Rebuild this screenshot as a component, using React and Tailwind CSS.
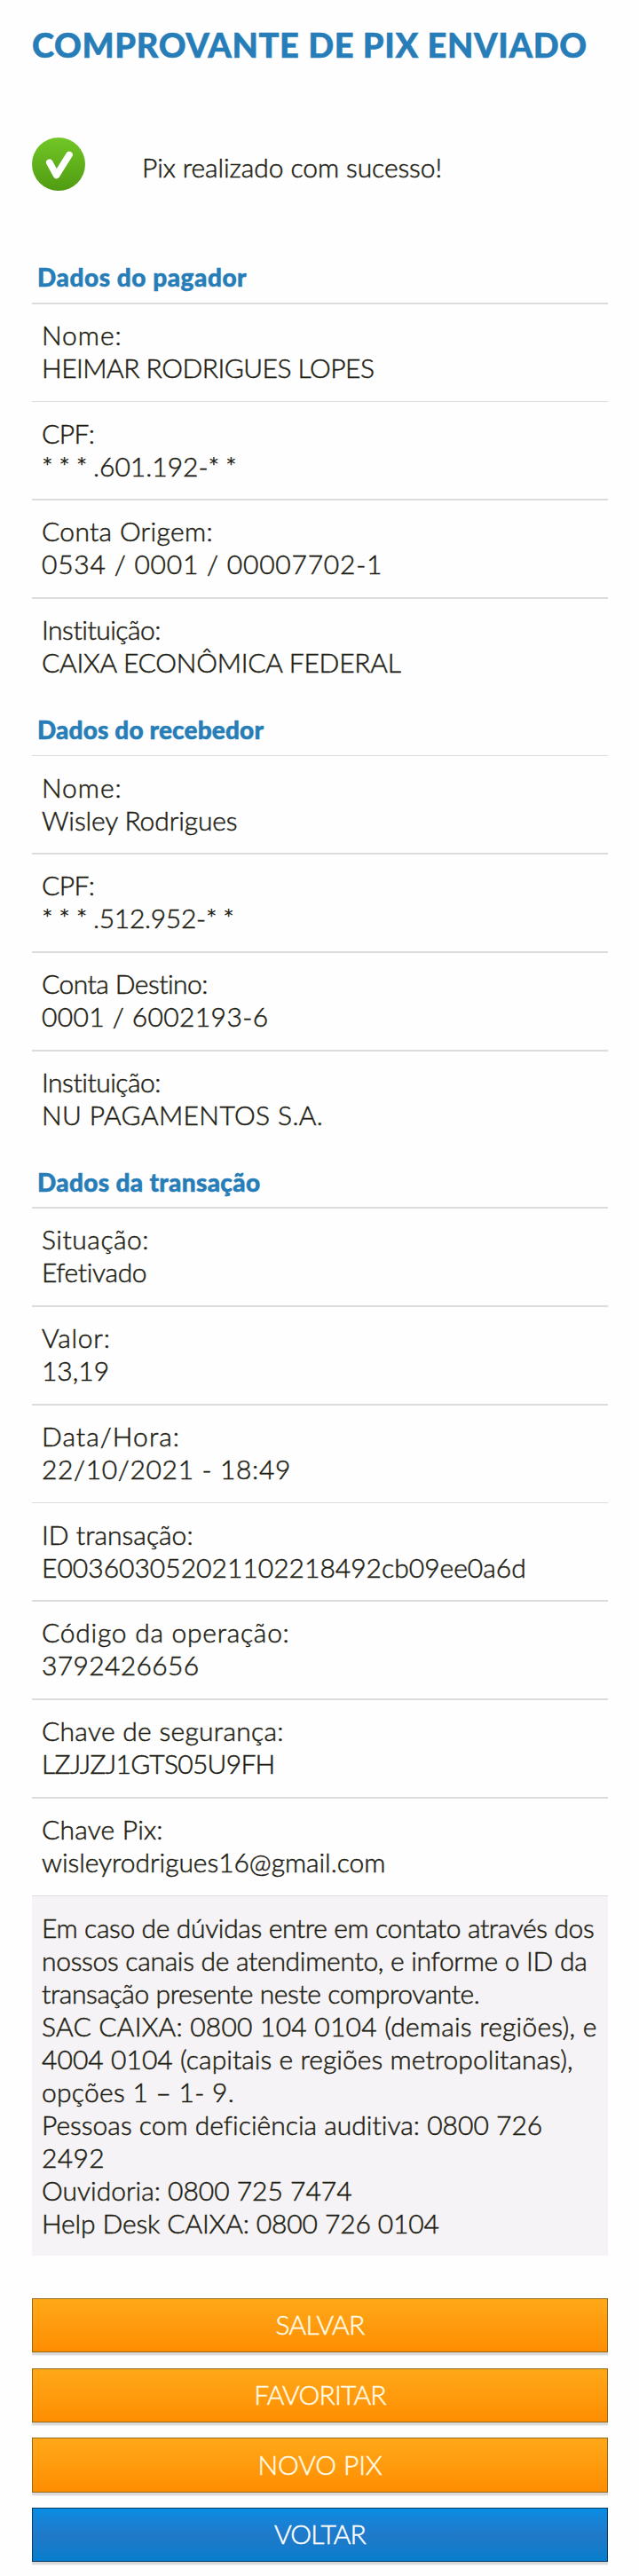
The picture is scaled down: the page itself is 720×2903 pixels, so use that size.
const THIN = "border-t pt-[17px]";
const THICK = "border-t-2 pt-4";

const payer = [
  { rule: THICK, h: "h-[111px]", label: "Nome:", ls: "tracking-[0.94px]", value: "HEIMAR RODRIGUES LOPES", vs: "tracking-[-0.51px]" },
  { rule: THIN, h: "h-[110px]", label: "CPF:", ls: "tracking-[-0.6px]", value: "***.601.192-**", vs: "tracking-[0px]" },
  { rule: THICK, h: "h-[111px]", label: "Conta Origem:", ls: "tracking-[0.32px]", value: "0534 / 0001 / 00007702-1", vs: "tracking-[0.78px]" },
  { rule: THICK, h: "h-[111px]", label: "Instituição:", ls: "tracking-[-0.48px]", value: "CAIXA ECONÔMICA FEDERAL", vs: "tracking-[-0.23px]" },
];

const receiver = [
  { rule: THIN, h: "h-[110px]", label: "Nome:", ls: "tracking-[0.94px]", value: "Wisley Rodrigues", vs: "tracking-[-0.12px]" },
  { rule: THICK, h: "h-[111px]", label: "CPF:", ls: "tracking-[-0.6px]", value: "***.512.952-**", vs: "tracking-[-0.3px]" },
  { rule: THICK, h: "h-[111px]", label: "Conta Destino:", ls: "tracking-[-0.53px]", value: "0001 / 6002193-6", vs: "tracking-[0.39px]" },
  { rule: THICK, h: "h-[111px]", label: "Instituição:", ls: "tracking-[-0.48px]", value: "NU PAGAMENTOS S.A.", vs: "tracking-[0.38px]" },
];

const transaction = [
  { rule: THICK, h: "h-[111px]", label: "Situação:", ls: "tracking-[0.52px]", value: "Efetivado", vs: "tracking-[-0.35px]" },
  { rule: THICK, h: "h-[111px]", label: "Valor:", ls: "tracking-[0.72px]", value: "13,19", vs: "tracking-[-0.03px]" },
  { rule: THICK, h: "h-[111px]", label: "Data/Hora:", ls: "tracking-[1.06px]", value: "22/10/2021 - 18:49", vs: "tracking-[0.64px]" },
  { rule: THIN, h: "h-[110px]", label: "ID transação:", ls: "tracking-[0.03px]", value: "E003603052021102218492cb09ee0a6d", vs: "tracking-[0.01px]" },
  { rule: THICK, h: "h-[111px]", label: "Código da operação:", ls: "tracking-[0.74px]", value: "3792426656", vs: "tracking-[0.34px]" },
  { rule: THICK, h: "h-[111px]", label: "Chave de segurança:", ls: "tracking-[0.29px]", value: "LZJJZJ1GTS05U9FH", vs: "tracking-[-0.71px]" },
  { rule: THICK, h: "h-[111px]", label: "Chave Pix:", ls: "tracking-[0.2px]", value: "wisleyrodrigues16@gmail.com", vs: "tracking-[-0.05px]" },
];

const notice = [
  ["Em caso de dúvidas entre em contato através dos", "tracking-[-0.36px]"],
  ["nossos canais de atendimento, e informe o ID da", "tracking-[-0.29px]"],
  ["transação presente neste comprovante.", "tracking-[-0.39px]"],
  ["SAC CAIXA: 0800 104 0104 (demais regiões), e", "tracking-[0.22px]"],
  ["4004 0104 (capitais e regiões metropolitanas),", "tracking-[0.05px]"],
  ["opções 1 – 1- 9.", "tracking-[0.28px]"],
  ["Pessoas com deficiência auditiva: 0800 726", "tracking-[0.01px]"],
  ["2492", "tracking-[0.33px]"],
  ["Ouvidoria: 0800 725 7474", "tracking-[-0.01px]"],
  ["Help Desk CAIXA: 0800 726 0104", "tracking-[-0.13px]"],
];

const ORANGE = "border-[#936818] bg-linear-to-b from-[#ffa818] to-[#ff8d00] text-[#fffbe6]";
const BLUE = "border-[#0c3a66] bg-linear-to-b from-[#058de4] via-[#2079c9] to-[#037ecc] text-white";

// Masked digits are spaced wider than the visible ones.
function Value({ text }) {
  return text.split(/(\*+)/).filter(Boolean).map((part, i) =>
    part[0] === "*" ? <span key={i} className="tracking-[6.6px]">{part}</span> : part
  );
}

function Section({ title, tracking, height, rows }) {
  return (
    <section>
      <h2 className={`${height} pt-[20px] pl-[6px] text-[28px] leading-[37px] font-black text-[#267db7] ${tracking}`}>{title}</h2>
      {rows.map((r) => (
        <dl key={r.label} className={`${r.h} ${r.rule} border-[#dcdcdc] pl-[11px]`}>
          <dt className={r.ls}>{r.label}</dt>
          <dd className={r.vs}><Value text={r.value} /></dd>
        </dl>
      ))}
    </section>
  );
}

function Button({ className, tracking, children }) {
  return (
    <button className={`block w-full border pb-[2px] text-center leading-[37px] shadow-[0_3px_0_rgba(0,0,0,0.09),0_4px_0_rgba(0,0,0,0.05)] ${className}`}>
      <span className={`block h-[37px] ${tracking}`}>{children}</span>
    </button>
  );
}

function SuccessIcon() {
  return (
    <svg className="h-[60px] w-[60px]" viewBox="0 0 60 60" fill="none">
      <defs>
        <linearGradient id="ok" x1="0" y1="0" x2="0" y2="1">
          <stop offset="0" stopColor="#72c626" />
          <stop offset="1" stopColor="#509c12" />
        </linearGradient>
      </defs>
      <circle cx="30" cy="30" r="30" fill="url(#ok)" />
      <path d="M19.8 28.2 L27.6 42.5 L42 19.4" stroke="#fff" strokeWidth="7.6" strokeLinecap="round" strokeLinejoin="round" />
    </svg>
  );
}

export default function App() {
  return (
    <main className="h-[2903px] w-[720px] overflow-hidden bg-[#fefefe] pl-9 font-['Lato',sans-serif] text-[30px] leading-[37px] font-light whitespace-nowrap text-[#1d1d14] [-webkit-text-stroke:0.5px]">
      <div className="w-[649px]">
        <h1 className="h-[155px] pt-[26px] text-[38px] leading-[48px] font-black tracking-[0.63px] text-[#267db7]">COMPROVANTE DE PIX ENVIADO</h1>
        <div className="flex h-[119px] gap-[64px]">
          <SuccessIcon />
          <p className="pt-[15px] tracking-[-0.08px]">Pix realizado com sucesso!</p>
        </div>
        <Section title="Dados do pagador" tracking="tracking-[0.54px]" height="h-[67px]" rows={payer} />
        <Section title="Dados do recebedor" tracking="tracking-[0.14px]" height="h-[67px]" rows={receiver} />
        <Section title="Dados da transação" tracking="tracking-[0.33px]" height="h-[66px]" rows={transaction} />
        <div className="h-[406px] border-t border-[#dcdcdc] bg-[#f5f3f5] pt-[17px] pl-[11px]">
          {notice.map(([line, tracking]) => (
            <p key={line} className={tracking}>{line}</p>
          ))}
        </div>
        <div className="pt-12">
          <Button className={`mb-[18px] h-[61px] ${ORANGE}`} tracking="tracking-[-0.64px]">SALVAR</Button>
          <Button className={`mb-[17px] h-[61px] ${ORANGE}`} tracking="tracking-[-0.79px]">FAVORITAR</Button>
          <Button className={`mb-[17px] h-[62px] ${ORANGE}`} tracking="tracking-[-0.09px]">NOVO PIX</Button>
          <Button className={`h-[61px] ${BLUE}`} tracking="tracking-[-0.92px]">VOLTAR</Button>
        </div>
      </div>
    </main>
  );
}
